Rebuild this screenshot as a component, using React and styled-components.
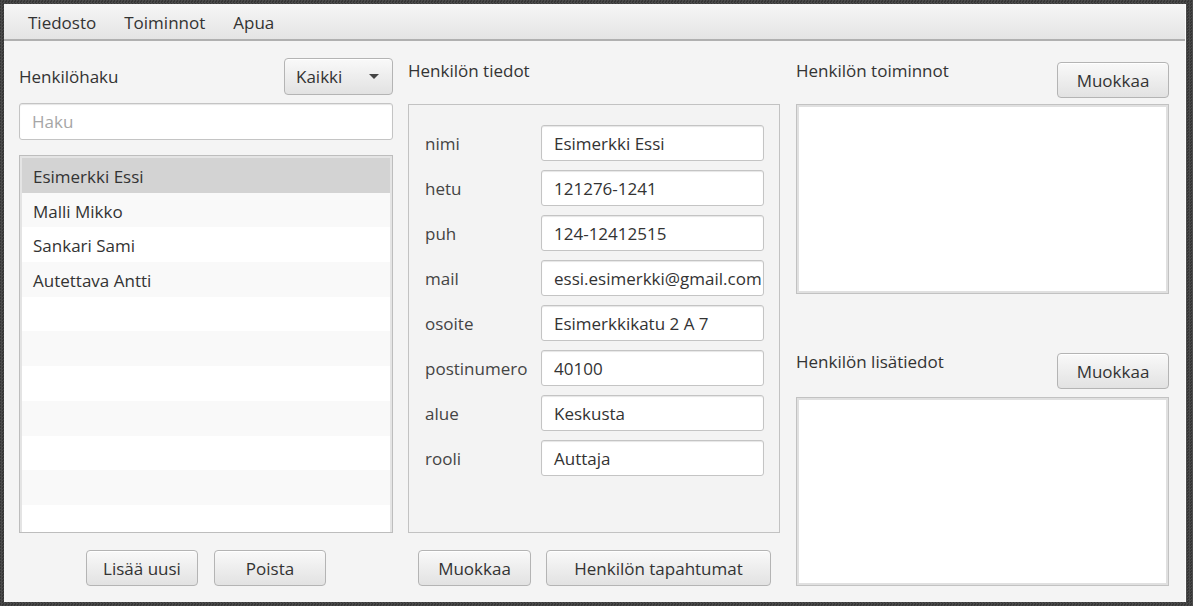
import React from "react";
import styled, { createGlobalStyle } from "styled-components";

const GlobalStyle = createGlobalStyle`
  html, body {
    margin: 0;
    padding: 0;
    height: 100%;
  }
  body {
    font-family: "Open Sans", "Noto Sans", sans-serif;
    font-size: 17px;
    color: #333333;
  }
  #root {
    height: 100%;
  }
`;

const Desktop = styled.div`
  box-sizing: border-box;
  height: 606px;
  padding: 4px 7px 4px 4px;
  background-color: #3f3f3f;
  background-image: repeating-conic-gradient(#4a4a4a 0 25%, #363636 0 50%);
  background-size: 3px 3px;
`;

const Window = styled.div`
  display: flex;
  flex-direction: column;
  height: 100%;
  background: #f4f4f4;
  border-right: 1px solid #fbfbfb;
`;

const MenuBar = styled.div`
  display: flex;
  align-items: center;
  box-sizing: border-box;
  height: 37px;
  padding: 2px 0 0 12px;
  background: linear-gradient(#f6f6f6, #e4e4e4);
  border-bottom: 2px solid #b0b0b0;
  flex-shrink: 0;
`;

const MenuItem = styled.div`
  padding: 0 12px;
  margin-right: ${(p) => p.$gap || 0}px;
`;

const Content = styled.div`
  flex: 1;
  display: grid;
  grid-template-columns: 374px 372px 1fr;
  column-gap: 15px;
  padding: 17px 16px 16px 15px;
  min-height: 0;
  & > :nth-child(3) {
    margin-left: 1px;
  }
`;

const Column = styled.div`
  display: flex;
  flex-direction: column;
  min-height: 0;
`;

const Header = styled.div`
  display: flex;
  justify-content: space-between;
  align-items: ${(p) => (p.$center ? "center" : "flex-start")};
  height: ${(p) => p.$height}px;
  margin-top: ${(p) => p.$top || 0}px;
  flex-shrink: 0;
`;

const Title = styled.div`
  line-height: 22px;
  padding-top: ${(p) => p.$pad || 0}px;
`;

const Button = styled.button`
  box-sizing: border-box;
  height: 36px;
  width: ${(p) => p.$width}px;
  margin-top: ${(p) => p.$top || 0}px;
  padding: 0;
  font-family: inherit;
  font-size: 17px;
  color: #333333;
  background: linear-gradient(#f9f9f9, #e2e2e2);
  border: 1px solid #b4b4b4;
  border-radius: 4px;
  box-shadow: inset 0 1px 0 #ffffff;
`;

const Combo = styled.div`
  box-sizing: border-box;
  display: flex;
  align-items: center;
  justify-content: space-between;
  width: 109px;
  height: 37px;
  padding: 0 13px 0 11px;
  background: linear-gradient(#f9f9f9, #e2e2e2);
  border: 1px solid #b4b4b4;
  border-radius: 4px;
  box-shadow: inset 0 1px 0 #ffffff;
`;

const Arrow = styled.span`
  width: 0;
  height: 0;
  border-left: 5px solid transparent;
  border-right: 5px solid transparent;
  border-top: 5px solid #444444;
`;

const Field = styled.div`
  box-sizing: border-box;
  display: flex;
  align-items: center;
  height: ${(p) => p.$height || 36}px;
  margin-top: ${(p) => p.$top || 0}px;
  padding-left: 12px;
  color: ${(p) => (p.$placeholder ? "#a6a6a6" : "#333333")};
  background: #ffffff;
  border: 1px solid #c4c4c4;
  border-radius: 3px;
  box-shadow: inset 0 1px 1px #e6e6e6;
  white-space: nowrap;
  overflow: hidden;
`;

const List = styled.div`
  box-sizing: border-box;
  height: 378px;
  margin-top: 15px;
  padding: 2px;
  background: #ffffff;
  border: 1px solid #bdbdbd;
  box-shadow: inset 0 0 0 2px #e4e4e4;
  overflow: hidden;
`;

const Row = styled.div`
  display: flex;
  align-items: center;
  box-sizing: border-box;
  height: 34.7px;
  padding: 2px 0 0 11px;
  background: ${(p) => (p.$selected ? "#d3d3d3" : p.$odd ? "#f9f9f9" : "#ffffff")};
`;

const ButtonRow = styled.div`
  display: flex;
  justify-content: ${(p) => (p.$left ? "flex-start" : "center")};
  gap: ${(p) => p.$gap}px;
  padding-left: ${(p) => p.$indent || 0}px;
  margin-top: 17px;
`;

const Panel = styled.div`
  box-sizing: border-box;
  height: 429px;
  padding: 20px 15px 0 16px;
  background: #f3f3f3;
  border: 1px solid #c2c2c2;
`;

const FormGrid = styled.div`
  display: grid;
  grid-template-columns: 116px 223px;
  grid-auto-rows: 36px;
  row-gap: 9px;
  align-items: center;
`;

const FormLabel = styled.div`
  color: #444444;
`;

const TextArea = styled.div`
  box-sizing: border-box;
  height: ${(p) => p.$height}px;
  background: #ffffff;
  border: 1px solid #c2c2c2;
  box-shadow: inset 0 0 0 2px #e0e0e0;
`;

const people = ["Esimerkki Essi", "Malli Mikko", "Sankari Sami", "Autettava Antti"];

const details = [
  ["nimi", "Esimerkki Essi"],
  ["hetu", "121276-1241"],
  ["puh", "124-12412515"],
  ["mail", "essi.esimerkki@gmail.com"],
  ["osoite", "Esimerkkikatu 2 A 7"],
  ["postinumero", "40100"],
  ["alue", "Keskusta"],
  ["rooli", "Auttaja"],
];

const App = () => {
  const rows = Array.from({ length: 11 }, (_, i) => people[i] || "");
  return (
    <>
      <GlobalStyle />
      <Desktop>
        <Window>
          <MenuBar>
            <MenuItem $gap={4}>Tiedosto</MenuItem>
            <MenuItem $gap={4}>Toiminnot</MenuItem>
            <MenuItem>Apua</MenuItem>
          </MenuBar>
          <Content>
            <Column>
              <Header $height={37} $center>
                <Title>Henkilöhaku</Title>
                <Combo>
                  Kaikki
                  <Arrow />
                </Combo>
              </Header>
              <Field $height={37} $top={8} $placeholder>
                Haku
              </Field>
              <List>
                {rows.map((name, i) => (
                  <Row key={i} $selected={i === 0} $odd={i % 2 === 1}>
                    {name}
                  </Row>
                ))}
              </List>
              <ButtonRow $gap={16}>
                <Button $width={112}>Lisää uusi</Button>
                <Button $width={112}>Poista</Button>
              </ButtonRow>
            </Column>

            <Column>
              <Header $height={46}>
                <Title $pad={2}>Henkilön tiedot</Title>
              </Header>
              <Panel>
                <FormGrid>
                  {details.map(([label, value]) => (
                    <React.Fragment key={label}>
                      <FormLabel>{label}</FormLabel>
                      <Field>{value}</Field>
                    </React.Fragment>
                  ))}
                </FormGrid>
              </Panel>
              <ButtonRow $left $gap={15} $indent={10}>
                <Button $width={113}>Muokkaa</Button>
                <Button $width={225}>Henkilön tapahtumat</Button>
              </ButtonRow>
            </Column>

            <Column>
              <Header $height={46}>
                <Title $pad={2}>Henkilön toiminnot</Title>
                <Button $width={112} $top={4}>Muokkaa</Button>
              </Header>
              <TextArea $height={190} />
              <Header $height={48} $top={55}>
                <Title $pad={2}>Henkilön lisätiedot</Title>
                <Button $width={112} $top={4}>Muokkaa</Button>
              </Header>
              <TextArea $height={189} />
            </Column>
          </Content>
        </Window>
      </Desktop>
    </>
  );
};

export default App;
